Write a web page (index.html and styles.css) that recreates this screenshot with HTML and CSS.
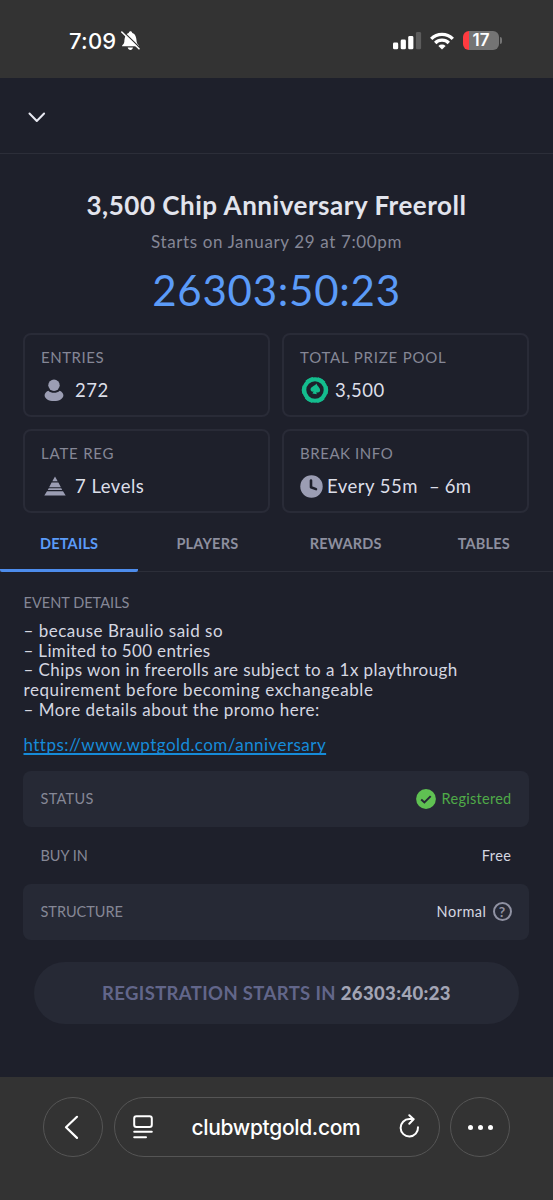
FILE: index.html
```html
<!DOCTYPE html>
<html lang="en">
<head>
<meta charset="utf-8">
<meta name="viewport" content="width=device-width">
<title>3,500 Chip Anniversary Freeroll</title>
<link rel="stylesheet" href="styles.css">
</head>
<body>
<div class="phone">
  <div class="statusbar">
    <div class="clock">
      <span class="time">7:09</span>
      <svg class="bell" width="19" height="20" viewBox="0 0 19 20">
        <path d="M1 15.2c0-1.300 2-2 2.300-4.200C3.700 6 4.500 3 7.700 2.100 8 .9 8.700.3 9.500.3s1.500.6 1.800 1.800c3.200.9 4 3.900 4.400 8.900.3 2.200 2.300 2.900 2.300 4.200z" fill="#fff"/>
        <path d="M6.700 16.600h5.300c-.3 1.500-1.300 2.300-2.600 2.300s-2.400-.8-2.700-2.300z" fill="#fff"/>
        <path d="M1.200 -.4l18 17.600" stroke="#333" stroke-width="1.300"/>
        <path d="M.8 1l17.200 16.800" stroke="#fff" stroke-width="1.600" stroke-linecap="round"/>
      </svg>
    </div>
    <div class="signals">
      <svg width="29" height="18" viewBox="0 0 29 18">
        <rect x="0" y="10.500" width="5.200" height="6.800" rx="1.400" fill="#fff"/>
        <rect x="7.700" y="7.500" width="5.200" height="9.800" rx="1.400" fill="#fff"/>
        <rect x="15.200" y="4" width="5.200" height="13.300" rx="1.400" fill="#fff"/>
        <rect x="22.900" y="0" width="5.200" height="17.300" rx="1.400" fill="#5c5c5c"/>
      </svg>
      <svg class="wifi" width="24" height="18" viewBox="0 0 24 18" fill="none" stroke="#fff" stroke-width="3.300">
        <path d="M1.200 6.800a15.300 15.300 0 0 1 21.600 0"/>
        <path d="M5.200 11a9.600 9.600 0 0 1 13.600 0"/>
        <path d="M12 17.500l-3.600-3.600a5.100 5.100 0 0 1 7.200 0z" fill="#fff" stroke="none"/>
      </svg>
      <div class="battery"><span>17</span></div>
      <i class="battery-tip"></i>
    </div>
  </div>

  <header class="topbar">
    <svg width="18" height="11" viewBox="0 0 18 11" fill="none" stroke="#e8e9f2" stroke-width="2" stroke-linecap="round" stroke-linejoin="round"><path d="M1.500 1.500L8.800 9l7.300-7.500"/></svg>
  </header>

  <main>
    <section class="hero">
      <h1>3,500 Chip Anniversary Freeroll</h1>
      <p class="starts">Starts on January 29 at 7:00pm</p>
      <p class="countdown">26303:50:23</p>
    </section>

    <section class="cards">
      <div class="card">
        <div class="label">ENTRIES</div>
        <div class="value">
          <span class="icon"><svg width="20" height="23" viewBox="0 0 20 23" fill="#9b9db3"><circle cx="10" cy="6.200" r="5.700"/><path d="M4.300 11.700c1.500 1.300 3.500 2.100 5.700 2.100s4.200-.8 5.700-2.100c2.200 1 3.700 2.600 3.700 4.500 0 3.400-4 5.900-9.400 5.900S.6 19.600.6 16.200c0-1.900 1.500-3.500 3.700-4.500z"/></svg></span>
          <span>272</span>
        </div>
      </div>
      <div class="card">
        <div class="label wide">TOTAL PRIZE POOL</div>
        <div class="value">
          <span class="icon chip"><svg width="28" height="28" viewBox="0 0 28 28"><circle cx="14" cy="14" r="10.700" fill="none" stroke="#14bd8e" stroke-width="4"/><circle cx="14" cy="14" r="12.500" fill="none" stroke="#14bd8e" stroke-width="1.500" stroke-dasharray="8.090 5" transform="rotate(-18 14 14)"/><path d="M15.500 7.500c.3 2.400 3.900 4.200 3.600 7-.2 1.900-2.300 2.500-3.700 1.400l.3 2.400-4.300-.7 1.200-2c-1.900.5-3.500-1-3-2.800.8-2.500 4.600-2.900 5.900-5.300z" fill="#14bd8e"/></svg></span>
          <span>3,500</span>
        </div>
      </div>
      <div class="card">
        <div class="label wide">LATE REG</div>
        <div class="value">
          <span class="icon"><svg width="22" height="20" viewBox="0 0 22 20" fill="#9b9db3"><path d="M11 .5l2.700 4.700H8.300zM7.600 6.500h6.800l2.500 4.700H5.100zM4.700 12.200h12.600l.9 1.800H3.800zM3 15.200h16l2.700 4.300H.3z"/></svg></span>
          <span>7 Levels</span>
        </div>
      </div>
      <div class="card">
        <div class="label">BREAK INFO</div>
        <div class="value">
          <span class="icon clockicon"><svg width="23" height="23" viewBox="0 0 23 23"><circle cx="11.500" cy="11.500" r="11.200" fill="#9b9db3"/><path d="M11 5.500v6.700l5 1.900" fill="none" stroke="#1e202b" stroke-width="2.600" stroke-linecap="round" stroke-linejoin="round"/></svg></span>
          <span>Every 55m</span><span class="rest">– 6m</span>
        </div>
      </div>
    </section>

    <nav class="tabs">
      <a class="tab active">DETAILS</a>
      <a class="tab">PLAYERS</a>
      <a class="tab">REWARDS</a>
      <a class="tab">TABLES</a>
    </nav>

    <section class="event">
      <h2>EVENT DETAILS</h2>
      <p class="line">– because Braulio said so</p>
      <p class="line tight">– Limited to 500 entries</p>
      <p class="line snug">– Chips won in freerolls are subject to a 1x playthrough</p>
      <p class="line loose">requirement before becoming exchangeable</p>
      <p class="line">– More details about the promo here:</p>
      <p class="link"><a>https://www.wptgold.com/anniversary</a></p>
    </section>

    <section class="rows">
      <div class="row shaded">
        <span class="key status">STATUS</span>
        <span class="val green"><svg width="20" height="20" viewBox="0 0 20 20"><circle cx="10" cy="10" r="9.900" fill="#5fc152"/><path d="M5.200 10.400l3.200 3 6.300-6.300" fill="none" stroke="#252835" stroke-width="2"/></svg><span>Registered</span></span>
      </div>
      <div class="row">
        <span class="key">BUY IN</span>
        <span class="val">Free</span>
      </div>
      <div class="row shaded">
        <span class="key">STRUCTURE</span>
        <span class="val">Normal<span class="help">?</span></span>
      </div>
    </section>

    <div class="register">REGISTRATION STARTS IN <b>26303:40:23</b></div>
  </main>

  <footer class="browser">
    <div class="round"><svg width="15" height="25" viewBox="0 0 15 25" fill="none" stroke="#fff" stroke-width="2.200" stroke-linecap="round" stroke-linejoin="round"><path d="M13 1.800L2 12.300l11 10.600"/></svg></div>
    <div class="address">
      <svg class="page" width="20" height="24" viewBox="0 0 20 24" fill="none" stroke="#fff" stroke-width="2" stroke-linecap="round"><rect x="1.200" y="1.200" width="17.600" height="10.800" rx="2.200"/><path d="M1.200 16.800h17.600M1.200 22.300h11.800"/></svg>
      <span class="url">clubwptgold.com</span>
      <svg class="reload" width="21" height="24" viewBox="0 0 21 24" fill="none" stroke="#fff" stroke-width="2" stroke-linecap="round" stroke-linejoin="round"><path d="M19 13.300A8.700 8.700 0 1 1 10.300 5.100h4"/><path d="M10.300 1.300l4.300 4-4.300 4.400"/></svg>
    </div>
    <div class="round dots"><i></i><i></i><i></i></div>
  </footer>
</div>
</body>
</html>
```
FILE: styles.css
```css
* { box-sizing: border-box; margin: 0; padding: 0; }
body { background: #1e202b; font-family: Lato, sans-serif; }
svg { display: block; flex: none; }
.phone { width: 553px; height: 1200px; display: flex; flex-direction: column; overflow: hidden; white-space: nowrap; }

.statusbar { height: 78px; background: #333; display: flex; justify-content: space-between; padding: 0 51px 0 69px; }
.clock { display: flex; height: 82px; align-items: center; font: 500 22px Inter, sans-serif; color: #fff; }
.time { width: 48px; letter-spacing: .2px; }
.bell { margin-left: 4px; }
.signals { display: flex; height: 81px; align-items: center; }
.wifi { margin-left: 8px; }
.battery { width: 36px; height: 19px; margin-left: 9px; border-radius: 6px; background: linear-gradient(90deg, #ff3b40 6px, #747474 6px); font: 600 17px/19px Inter, sans-serif; color: #fff; text-align: center; }
.battery-tip { width: 2px; height: 7px; margin-left: 1px; border-radius: 0 2px 2px 0; background: #747474; }

.topbar { height: 76px; border-bottom: 1px solid #2c2e39; padding: 34px 0 0 28px; }
main { height: 923px; }

.hero { height: 179px; text-align: center; padding-top: 35px; }
h1 { font-size: 26px; line-height: 32px; letter-spacing: .52px; color: #e2e4ed; }
.starts { font-size: 17px; line-height: 24px; margin-top: 9px; letter-spacing: .63px; color: #858796; }
.countdown { font-size: 42px; line-height: 50px; margin-top: 11px; letter-spacing: .75px; color: #5b9bf8; }

.cards { display: grid; grid-template-columns: 247px 247px; grid-auto-rows: 84px; gap: 12px; padding-left: 23px; }
.card { border: 2px solid #292b37; border-radius: 8px; padding: 11px 0 0 16px; }
.label { font-size: 15px; line-height: 22px; letter-spacing: .55px; color: #858796; }
.label.wide { letter-spacing: .8px; }
.value { display: flex; align-items: center; height: 32px; margin-top: 6px; font-size: 18.500px; letter-spacing: .5px; color: #dcdee8; }
.icon { width: 34px; display: flex; padding-left: 3px; }
.icon.chip { width: 35px; padding-left: 1px; }
.icon.clockicon { width: 27px; padding-left: 0; }
.rest { margin-left: 11px; letter-spacing: .15px; }

.tabs { display: grid; grid-template-columns: repeat(4, 1fr); height: 59px; border-bottom: 1px solid #2c2e39; }
.tab { padding-top: 20px; text-align: center; font-size: 14.500px; font-weight: 700; line-height: 22px; letter-spacing: .2px; color: #8d8f9f; }
.active { height: 59px; color: #5b9bf8; border-bottom: 3px solid #4d8cec; border-radius: 0 0 2px 2px; }

.event { padding: 20px 0 0 23.500px; }
h2 { font-size: 14.500px; font-weight: 400; line-height: 22px; letter-spacing: .03px; color: #858796; margin-bottom: 7px; }
.line { font-size: 17px; line-height: 19.700px; letter-spacing: .5px; color: #d5d7e1; }
.line.tight { letter-spacing: .33px; }
.line.snug { letter-spacing: .43px; }
.line.loose { letter-spacing: .59px; }
.link { margin-top: 13px; font-size: 17px; line-height: 24px; letter-spacing: .45px; color: #168bd9; }
.link a { text-decoration: underline; text-decoration-thickness: 1.500px; text-underline-offset: 2px; text-decoration-skip-ink: none; }

.rows { padding: 14px 24px 0 23px; }
.row { display: flex; align-items: center; justify-content: space-between; height: 57px; padding: 0 17.500px; font-size: 14.500px; }
.row.shaded { background: #262935; border-radius: 8px; height: 56px; }
.key { color: #858796; letter-spacing: 0; }
.key.status { letter-spacing: .3px; }
.val { display: flex; align-items: center; letter-spacing: .5px; color: #d5d7e1; }
.green { color: #4faa48; gap: 6px; letter-spacing: .28px; }
.help { width: 19px; height: 19px; margin-left: 6px; border: 2px solid #9092a3; border-radius: 50%; color: #9092a3; font-size: 14px; font-weight: 700; line-height: 15px; text-align: center; letter-spacing: 0; }

.register { width: 485px; height: 62px; margin: 22px 0 0 34px; border-radius: 31px; background: #262935; text-align: center; font-size: 18.500px; font-weight: 700; line-height: 63px; letter-spacing: .36px; color: #62668a; }
.register b { color: #a3a5b5; }

.browser { height: 123px; background: #333; display: flex; gap: 10.500px; padding: 20px 0 0 43px; }
.round { width: 60px; height: 60px; border: 1px solid #555; border-radius: 50%; display: flex; align-items: center; justify-content: center; padding-right: 4px; }
.address { width: 326px; height: 60px; border: 1px solid #555; border-radius: 30px; display: flex; align-items: center; padding: 0 19px 0 18.500px; }
.url { margin-left: 38.500px; width: 169px; font: 500 21px Inter, sans-serif; letter-spacing: -.33px; color: #fff; }
.reload { margin-left: auto; margin-top: -3px; }
.dots { gap: 5px; padding: 0; }
.dots i { width: 5px; height: 5px; border-radius: 50%; background: #fff; }
```
